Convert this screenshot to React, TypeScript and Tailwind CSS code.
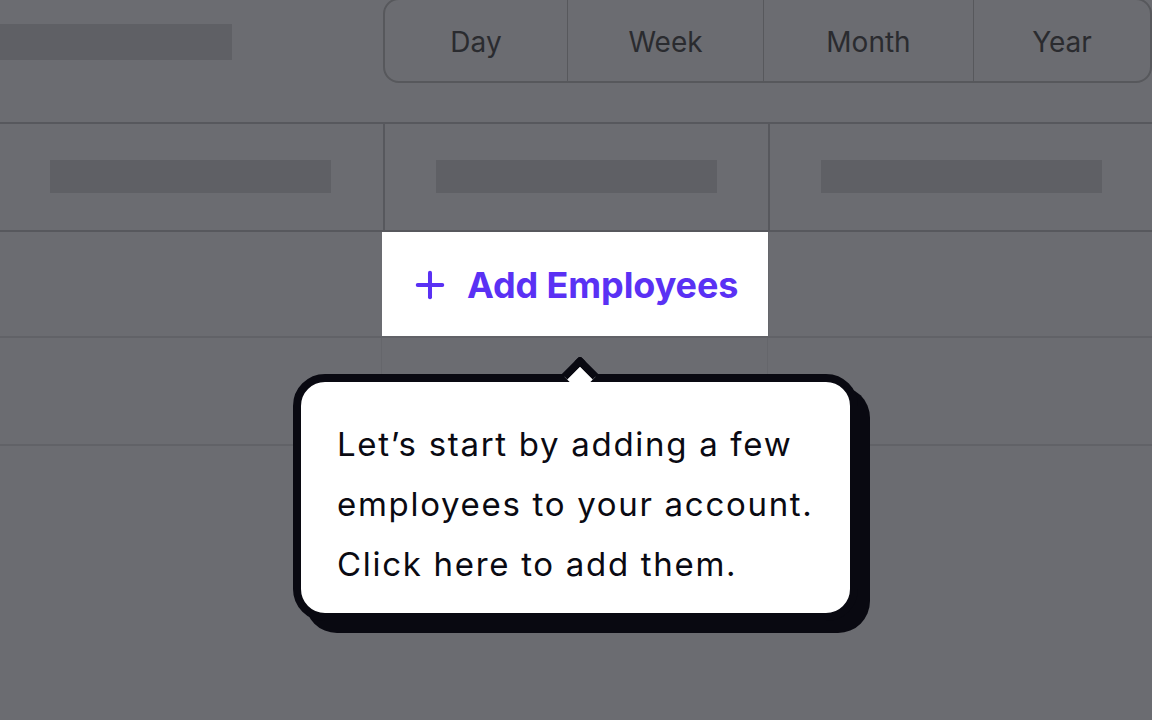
import { Plus } from 'lucide-react'

const ranges = [
    { label: 'Day', width: 'w-[182px]' },
    { label: 'Week', width: 'w-[196px]' },
    { label: 'Month', width: 'w-[210px]' },
    { label: 'Year', width: 'flex-1' },
]

function Skeleton({ className = '' }: { className?: string }) {
    return <div className={`bg-[#5f6065] ${className}`} />
}

export default function App() {
    return (
        <div className="relative w-[1152px] h-[720px] overflow-hidden bg-[#6b6c71] font-['Inter','Noto_Sans',sans-serif]">
            {/* header */}
            <div className="flex h-[124px] border-b-2 border-[#57585d]">
                <div className="w-[383px] shrink-0 pt-[24px]">
                    <Skeleton className="w-[232px] h-[36px]" />
                </div>
                <div className="flex w-[769px] h-[85px] -mt-[2px] border-2 border-[#57585c] rounded-2xl overflow-hidden">
                    {ranges.map((range, index) => (
                        <div
                            key={range.label}
                            className={`${range.width} flex items-center justify-center pt-[2px] text-[28px] text-[#2a2b2f] ${index > 0 ? 'border-l-[1.5px] border-[#57585c]' : ''}`}
                        >
                            {range.label}
                        </div>
                    ))}
                </div>
            </div>

            {/* skeleton row */}
            <div className="flex h-[108px] border-b-2 border-[#57585d]">
                <div className="w-[383px] flex justify-center pt-[36px]">
                    <Skeleton className="w-[281px] h-[33px] -translate-x-[1px]" />
                </div>
                <div className="w-[385px] flex justify-center pt-[36px] border-l-2 border-[#57585d]">
                    <Skeleton className="w-[281px] h-[33px]" />
                </div>
                <div className="flex-1 flex justify-center pt-[36px] border-l-2 border-[#57585d]">
                    <Skeleton className="w-[281px] h-[33px]" />
                </div>
            </div>

            {/* action row */}
            <div className="flex h-[106px] border-b-2 border-[#616267]">
                <div className="w-[382px]" />
                <button className="w-[386px] flex items-center bg-white pl-[27px] pt-[2px] text-[#5a31f4]">
                    <Plus className="w-[42px] h-[42px]" strokeWidth={2.3} />
                    <span className="ml-[16px] text-[36px] font-bold tracking-[-0.1px]">Add Employees</span>
                </button>
                <div className="flex-1 border-l border-[#65666b]" />
            </div>

            {/* empty row */}
            <div className="flex h-[108px] border-b-2 border-[#616267]">
                <div className="w-[382px] border-r border-[#65666b]" />
                <div className="w-[386px] border-r border-[#65666b]" />
                <div className="flex-1" />
            </div>

            {/* tooltip */}
            <div className="absolute left-[293px] top-[374px] w-[565px] rounded-[32px] border-[8px] border-[#090911] bg-white shadow-[12px_12px_0_#090911]">
                <div className="absolute left-[266px] -top-[21px] w-[26px] h-[26px] rotate-45 bg-white border-t-[8px] border-l-[8px] border-[#090911] rounded-tl-[4px]" />
                <p className="relative pl-[36px] pt-[32px] pb-[19px] text-[33px] leading-[60px] text-[#0a0a12] tracking-[1.7px]">
                    Let’s start by adding a few
                    <br />
                    employees to your account.
                    <br />
                    Click here to add them.
                </p>
            </div>
        </div>
    )
}
